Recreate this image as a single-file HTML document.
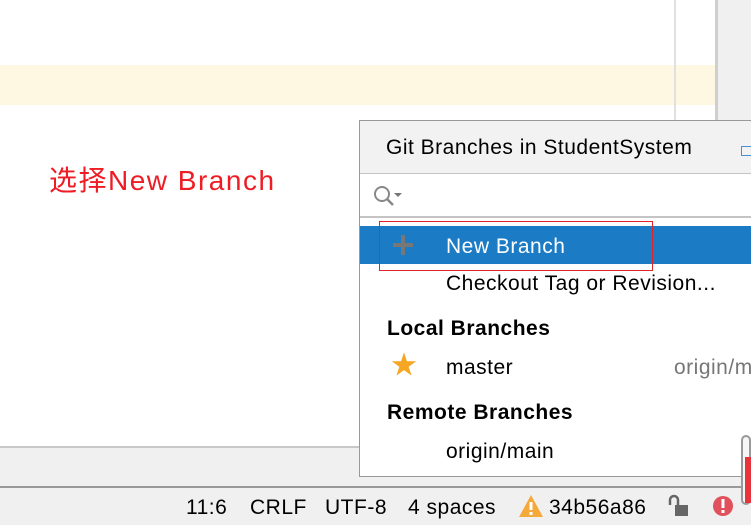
<!DOCTYPE html>
<html><head><meta charset="utf-8"><style>
*{margin:0;padding:0;box-sizing:border-box}
body{width:751px;height:525px;overflow:hidden;background:#fff;font-family:"Liberation Sans","Noto Sans CJK SC",sans-serif;position:relative}
.a{position:absolute}
.t{position:absolute;font-size:21px;letter-spacing:0.5px;color:#000;white-space:nowrap;line-height:1}
</style></head><body>
<div class="a" style="left:0;top:65px;width:715px;height:40px;background:#fef8e3"></div>
<div class="a" style="left:674px;top:0;width:2px;height:120px;background:#e0e0e0"></div>
<div class="a" style="left:715px;top:0;width:3px;height:120px;background:#cfcfcf"></div>
<div class="a" style="left:718px;top:0;width:33px;height:120px;background:#f0f0f0"></div>
<div class="t" style="left:49px;top:167px;font-size:28px;letter-spacing:1.5px;color:#ee1c25">选择New Branch</div>
<div class="a" style="left:0;top:446px;width:751px;height:2px;background:#c8c8c8"></div>
<div class="a" style="left:0;top:448px;width:751px;height:38px;background:#f0f0f0"></div>
<div class="a" style="left:0;top:486px;width:751px;height:2px;background:#999"></div>
<div class="a" style="left:0;top:488px;width:751px;height:37px;background:#f0f0f0"></div>
<!-- popup -->
<div class="a" style="left:359px;top:120px;width:392px;height:357px;background:#fff;border:1px solid #999;border-right:none"></div>
<div class="a" style="left:360px;top:121px;width:391px;height:53px;background:#f2f2f2;border-bottom:1px solid #c4c4c4"></div>
<div class="t" style="left:386px;top:137px">Git Branches in StudentSystem</div>
<div class="a" style="left:741px;top:146px;width:10px;height:10px;border:1.5px solid #4a8fd4;border-right:none"></div>
<svg class="a" style="left:372px;top:184px" width="34" height="26"><circle cx="10" cy="10" r="7" fill="none" stroke="#888" stroke-width="2"/><line x1="15" y1="15" x2="21" y2="21" stroke="#888" stroke-width="2.5"/><polygon points="22,9 30,9 26,13" fill="#777"/></svg>
<div class="a" style="left:360px;top:216px;width:391px;height:2px;background:#c4c4c4"></div>
<div class="a" style="left:360px;top:226px;width:391px;height:38px;background:#1b7bc4"></div>
<div class="a" style="left:393px;top:243px;width:20px;height:4px;background:#777"></div>
<div class="a" style="left:401px;top:235px;width:4px;height:20px;background:#777"></div>
<div class="t" style="left:446px;top:236px;color:#fff">New Branch</div>
<div class="a" style="left:379px;top:221px;width:274px;height:50px;border:1px solid #e0242a"></div>
<div class="t" style="left:446px;top:273px">Checkout Tag or Revision...</div>
<div class="t" style="left:387px;top:318px;font-weight:bold">Local Branches</div>
<div class="t" style="left:391px;top:352px;color:#f5a623;font-size:26px">★</div>
<div class="t" style="left:446px;top:357px">master</div>
<div class="t" style="left:674px;top:357px;color:#777">origin/main</div>
<div class="t" style="left:387px;top:402px;font-weight:bold">Remote Branches</div>
<div class="t" style="left:446px;top:441px">origin/main</div>
<div class="a" style="left:741px;top:435px;width:10px;height:70px;border:2px solid #999;border-radius:5px;background:#f5f5f5"></div>
<div class="a" style="left:745px;top:457px;width:6px;height:46px;background:#e8333c"></div>
<!-- status -->
<div class="t" style="left:186px;top:497px">11:6</div>
<div class="t" style="left:250px;top:497px">CRLF</div>
<div class="t" style="left:325px;top:497px">UTF-8</div>
<div class="t" style="left:408px;top:497px">4 spaces</div>
<svg class="a" style="left:518px;top:494px" width="26" height="24"><polygon points="13,1 25,23 1,23" fill="#f5a93b"/><rect x="11.5" y="8" width="3" height="8" fill="#fff"/><rect x="11.5" y="18" width="3" height="3" fill="#fff"/></svg>
<div class="t" style="left:549px;top:497px">34b56a86</div>
<svg class="a" style="left:666px;top:494px" width="24" height="24"><path d="M4 11V6a4 4 0 0 1 8 0v5" fill="none" stroke="#666" stroke-width="2.5"/><rect x="9" y="11" width="13" height="11" fill="#666"/></svg>
<svg class="a" style="left:712px;top:494px" width="24" height="24"><circle cx="11" cy="12" r="10" fill="#e0515c"/><rect x="9.5" y="5" width="3" height="9" fill="#fff"/><rect x="9.5" y="16" width="3" height="3" fill="#fff"/></svg>
</body></html>
